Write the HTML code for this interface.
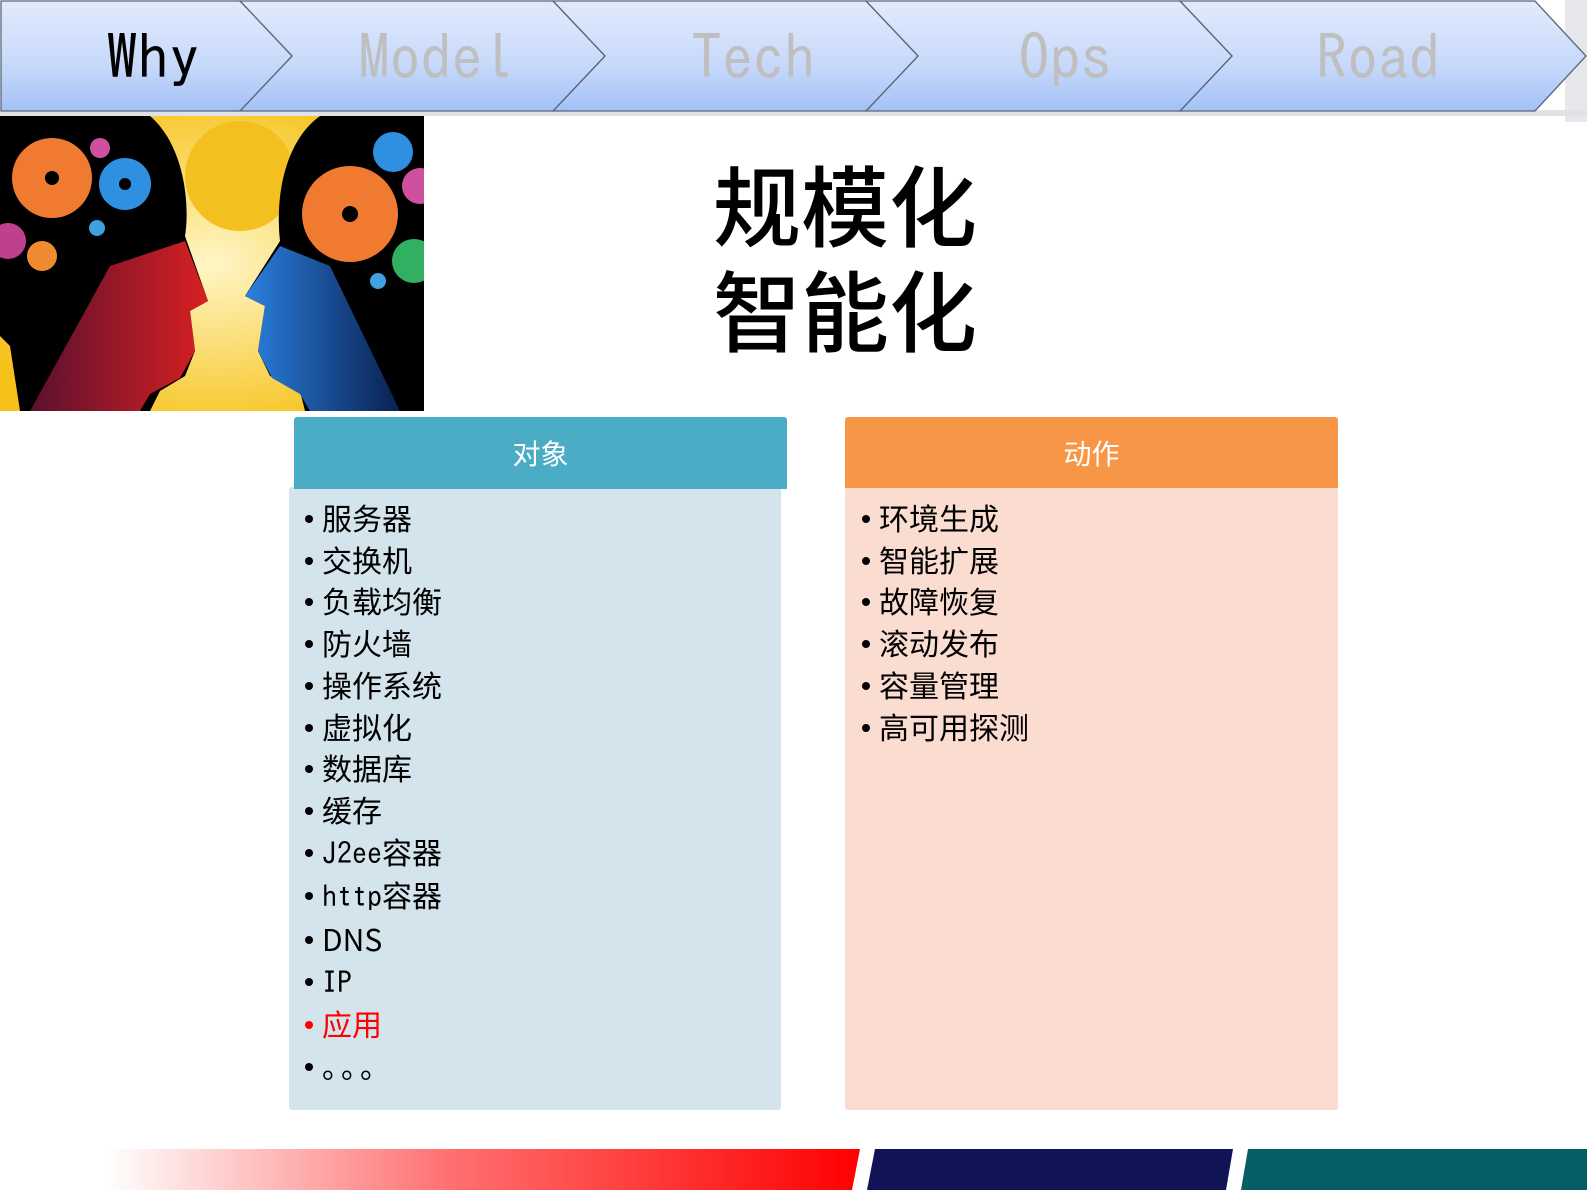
<!DOCTYPE html>
<html><head><meta charset="utf-8"><style>
*{margin:0;padding:0;box-sizing:border-box}
body{width:1587px;height:1190px;background:#fff;position:relative;overflow:hidden;font-family:"Liberation Sans","Noto Sans CJK SC",sans-serif}
.nav{position:absolute;left:0;top:0}
.navt{position:absolute;top:22px;font-family:"IPAGothic","Liberation Mono",monospace;font-size:62px;line-height:70px;color:#bfbfbf;transform:translateX(-50%);white-space:nowrap}
.title{position:absolute;left:713px;top:150px;font-family:"Noto Sans CJK SC",sans-serif;font-weight:500;font-size:88px;line-height:105px;color:#000}
.hdr{position:absolute;height:72px;color:#fff;font-family:"Noto Sans CJK SC",sans-serif;font-size:28px;line-height:72px;text-align:center;border-radius:3px 3px 0 0}
.box{position:absolute;top:487px;height:623px;border-radius:3px}
ul{position:absolute;list-style:none;font-family:"Noto Sans CJK SC",sans-serif;font-size:30px;line-height:41.7px;color:#000}
li{position:relative;padding-left:17px}
li:before{content:"";position:absolute;left:0;top:18px;width:8px;height:8px;border-radius:50%;background:currentColor}
.m{font-family:"IPAGothic","Liberation Mono",monospace}
</style></head><body>
<svg class="nav" width="1587" height="125" viewBox="0 0 1587 125">
<defs><linearGradient id="g" x1="0" y1="0" x2="0" y2="1"><stop offset="0" stop-color="#e2ebfd"/><stop offset="0.6" stop-color="#c6d8fa"/><stop offset="1" stop-color="#a3c1f7"/></linearGradient></defs>
<rect x="1565" y="0" width="22" height="122" fill="#e6e7ea"/>
<rect x="0" y="110" width="1587" height="6" fill="#e0e2e6"/>
<polygon points="1180,1 1535,1 1586,56 1535,111 1180,111 1232,56" fill="url(#g)" stroke="#5a6576" stroke-width="1.3"/>
<polygon points="866,1 1180,1 1232,56 1180,111 866,111 918,56" fill="url(#g)" stroke="#5a6576" stroke-width="1.3"/>
<polygon points="553,1 866,1 918,56 866,111 553,111 605,56" fill="url(#g)" stroke="#5a6576" stroke-width="1.3"/>
<polygon points="240,1 553,1 605,56 553,111 240,111 292,56" fill="url(#g)" stroke="#5a6576" stroke-width="1.3"/>
<polygon points="1,1 240,1 292,56 240,111 1,111" fill="url(#g)" stroke="#5a6576" stroke-width="1.3"/>
</svg>
<div class="navt" style="left:153px;color:#000">Why</div>
<div class="navt" style="left:436px">Model</div>
<div class="navt" style="left:753px">Tech</div>
<div class="navt" style="left:1065px">Ops</div>
<div class="navt" style="left:1378px">Road</div>

<svg style="position:absolute;left:0;top:116px" width="424" height="295" viewBox="0 0 424 295">
<defs><radialGradient id="y" cx="0.5" cy="0.5" r="0.6"><stop offset="0" stop-color="#fff6c8"/><stop offset="1" stop-color="#f6c21a"/></radialGradient>
<linearGradient id="rf" x1="0" y1="0" x2="1" y2="0"><stop offset="0" stop-color="#5a1030"/><stop offset="1" stop-color="#d82020"/></linearGradient>
<linearGradient id="bf" x1="1" y1="0" x2="0" y2="0"><stop offset="0" stop-color="#0a2050"/><stop offset="1" stop-color="#2a80e0"/></linearGradient></defs>
<rect width="424" height="295" fill="url(#y)"/>
<circle cx="240" cy="60" r="55" fill="#f4c020"/>
<path d="M0,0 L150,0 C185,30 190,90 185,120 L208,185 L190,195 L195,235 L185,260 L160,275 L150,295 L20,295 L10,230 L0,220 Z" fill="#000"/>
<path d="M110,150 L185,125 L208,185 L190,195 L195,235 L180,262 L150,278 L140,295 L30,295 Z" fill="url(#rf)"/>
<path d="M424,0 L320,0 C285,25 275,80 280,125 L245,180 L265,190 L258,235 L270,260 L300,275 L305,295 L424,295 Z" fill="#000"/>
<path d="M330,150 L280,130 L245,180 L265,190 L258,235 L272,262 L300,278 L310,295 L400,295 Z" fill="url(#bf)"/>
<circle cx="52" cy="62" r="40" fill="#f07a30"/><circle cx="52" cy="62" r="7" fill="#000"/>
<circle cx="125" cy="68" r="26" fill="#2f8fe0"/><circle cx="125" cy="68" r="6" fill="#000"/>
<circle cx="42" cy="140" r="15" fill="#f08a30"/><circle cx="8" cy="125" r="18" fill="#c04090"/>
<circle cx="100" cy="32" r="10" fill="#d050a0"/><circle cx="97" cy="112" r="8" fill="#40a0e0"/>
<circle cx="350" cy="98" r="48" fill="#f07a30"/><circle cx="350" cy="98" r="8" fill="#000"/>
<circle cx="393" cy="36" r="20" fill="#2f8fe0"/><circle cx="414" cy="145" r="22" fill="#30b060"/>
<circle cx="420" cy="70" r="18" fill="#d050a0"/><circle cx="378" cy="165" r="8" fill="#40a0e0"/>
</svg>

<div class="title">规模化<br>智能化</div>

<div class="box" style="left:289px;width:492px;background:#d3e4ec"></div>
<div class="hdr" style="left:294px;top:417px;width:493px;background:#4bacc6">对象</div>
<ul style="left:305px;top:497px">
<li>服务器</li><li>交换机</li><li>负载均衡</li><li>防火墙</li><li>操作系统</li><li>虚拟化</li><li>数据库</li><li>缓存</li><li><span class="m">J2ee</span>容器</li><li><span class="m">http</span>容器</li><li>DNS</li><li><span class="m">IP</span></li><li style="color:#f00">应用</li><li><span style="letter-spacing:4px">。。。</span></li>
</ul>

<div class="box" style="left:845px;width:493px;background:#fbdcd1"></div>
<div class="hdr" style="left:845px;top:417px;width:493px;height:71px;background:#f79646">动作</div>
<ul style="left:862px;top:497px">
<li>环境生成</li><li>智能扩展</li><li>故障恢复</li><li>滚动发布</li><li>容量管理</li><li>高可用探测</li>
</ul>

<svg style="position:absolute;left:0;top:1149px" width="1587" height="41">
<defs><linearGradient id="rd" x1="0" x2="1"><stop offset="0" stop-color="#fff"/><stop offset="0.08" stop-color="#fff"/><stop offset="0.5" stop-color="#ff7070"/><stop offset="1" stop-color="#f00"/></linearGradient></defs>
<polygon points="40,0 860,0 852,41 40,41" fill="url(#rd)"/>
<polygon points="875,0 1233,0 1226,41 867,41" fill="#101456"/>
<polygon points="1248,0 1587,0 1587,41 1241,41" fill="#055e65"/>
</svg>
</body></html>
